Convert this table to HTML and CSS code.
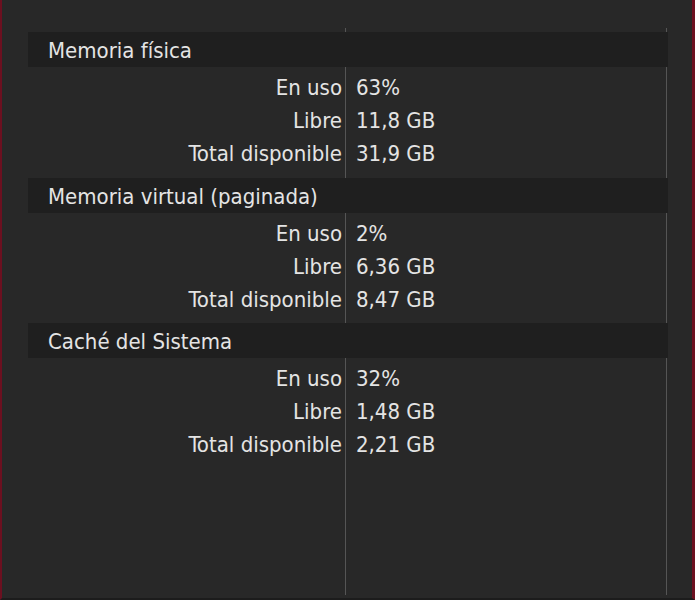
FILE: index.html
```html
<!DOCTYPE html>
<html lang="es">
<head>
<meta charset="utf-8">
<title>Memoria</title>
<link rel="stylesheet" href="styles.css">
</head>
<body>
<div class="frame">
  <div class="table">
    <section class="group">
      <div class="group-head">Memoria física</div>
      <div class="rows">
        <div class="label">En uso</div><div class="value">63%</div>
        <div class="label">Libre</div><div class="value">11,8 GB</div>
        <div class="label">Total disponible</div><div class="value">31,9 GB</div>
      </div>
    </section>
    <section class="group">
      <div class="group-head">Memoria virtual (paginada)</div>
      <div class="rows">
        <div class="label">En uso</div><div class="value">2%</div>
        <div class="label">Libre</div><div class="value">6,36 GB</div>
        <div class="label">Total disponible</div><div class="value">8,47 GB</div>
      </div>
    </section>
    <section class="group">
      <div class="group-head">Caché del Sistema</div>
      <div class="rows">
        <div class="label">En uso</div><div class="value">32%</div>
        <div class="label">Libre</div><div class="value">1,48 GB</div>
        <div class="label">Total disponible</div><div class="value">2,21 GB</div>
      </div>
    </section>
  </div>
</div>
</body>
</html>
```
FILE: styles.css
```css
html, body {
  margin: 0;
  padding: 0;
  background: #282828;
}
.frame {
  box-sizing: border-box;
  width: 695px;
  height: 600px;
  border-left: 2px solid #6c1020;
  border-right: 3px solid #6c1020;
  border-bottom: 2px solid #1c1c1c;
  padding: 28px 25px 3px 26px;
  background: #282828;
  font-family: "DejaVu Sans Condensed", "DejaVu Sans", sans-serif;
  font-size: 22px;
  color: #e4e4e4;
}
.table {
  height: 100%;
  width: 640px;
  padding-top: 4px;
  box-sizing: border-box;
  background-image:
    linear-gradient(#555555, #555555),
    linear-gradient(#555555, #555555);
  background-size: 1px 100%, 1px 100%;
  background-position: 317px 0, 638px 0;
  background-repeat: no-repeat;
}
.group-head {
  height: 35px;
  line-height: 37px;
  background: #1f1f1f;
  padding-left: 20px;
}
.rows {
  display: grid;
  grid-template-columns: 317px 1fr;
  grid-auto-rows: 33px;
  align-items: center;
  padding: 4px 0 7.5px;
}
.label {
  text-align: right;
  padding-right: 3px;
}
.value {
  padding-left: 11px;
}
```
